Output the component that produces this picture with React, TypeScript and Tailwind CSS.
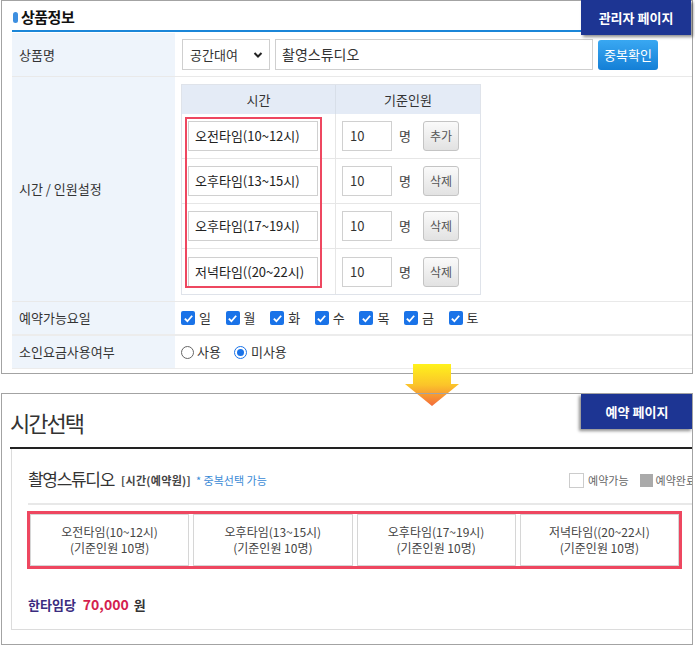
import React from "react";

const F = { fontFamily: '"Noto Sans CJK KR", "Noto Sans", sans-serif' };

function Check() {
  return (
    <span className="inline-flex w-[14px] h-[14px] rounded-[2px] bg-[#1a73e8] items-center justify-center">
      <svg width="11" height="11" viewBox="0 0 12 12">
        <path d="M2 6.2 L4.8 9 L10 3" stroke="white" strokeWidth="2" fill="none" />
      </svg>
    </span>
  );
}

const slots = [
  "오전타임(10~12시)",
  "오후타임(13~15시)",
  "오후타임(17~19시)",
  "저녁타임((20~22시)",
];

export default function App() {
  const days = ["일", "월", "화", "수", "목", "금", "토"];
  return (
    <div className="w-[695px] h-[646px] bg-white relative overflow-hidden text-[#333]" style={F}>
      {/* Top panel */}
      <div className="relative ml-[1px] w-[692px] h-[374px] border border-[#a3a3a3] pl-[10px]">
        <div className="h-[29px] flex items-end pb-[4px] gap-[3px]">
          <span className="w-[5px] h-[11px] rounded-[3px] bg-[#3d8fe0] mb-[3px] ml-[1px]"></span>
          <span className="text-[15px] font-bold leading-[18px] text-[#111] tracking-[-0.5px]">상품정보</span>
        </div>
        <div className="h-[2px] bg-[#1b86d8] mr-[4px]"></div>
        <div className="absolute right-[1px] top-[-1px] w-[110px] h-[35px] bg-[#1d3593] text-white text-[13px] font-bold flex items-center justify-center shadow-[2px_2px_3px_rgba(0,0,0,0.45)]">
          관리자 페이지
        </div>

        {/* rows */}
        <div className="mt-[1px] grid grid-cols-[163px_1fr] text-[13px]">
          {/* row1 */}
          <div className="h-[43px] bg-[#eef4fb] flex items-center pl-[7px]">상품명</div>
          <div className="h-[43px] flex items-center pl-[7px] gap-[5px]">
            <div className="w-[88px] h-[31px] border border-[#cfcfcf] flex items-center justify-between pl-[7px] pr-[6px]">
              <span>공간대여</span>
              <svg width="10" height="8" viewBox="0 0 10 8">
                <path d="M1.5 2 L5 5.5 L8.5 2" stroke="#222" strokeWidth="2" fill="none" />
              </svg>
            </div>
            <div className="w-[318px] h-[31px] border border-[#cfcfcf] flex items-center pl-[6px] text-[14px]">촬영스튜디오</div>
            <div className="w-[60px] h-[30px] rounded-[3px] bg-gradient-to-b from-[#39a8f2] to-[#137fd6] text-white flex items-center justify-center text-[13px]">
              중복확인
            </div>
          </div>
          <div className="col-span-2 h-[1px] bg-[#e9e9e9]"></div>

          {/* row2 */}
          <div className="h-[224px] bg-[#eef4fb] flex items-center pl-[7px]">시간 / 인원설정</div>
          <div className="h-[224px] pl-[6px] pt-[7px]">
            <div className="relative w-[300px] border border-[#dfe3ea]">
              <div className="grid grid-cols-[154px_1fr] h-[29px] bg-[#e4ebf6] text-[13px]">
                <div className="flex items-center justify-center border-r border-[#d8dfe9]">시간</div>
                <div className="flex items-center justify-center">기준인원</div>
              </div>
              {slots.map((s, i) => (
                <div key={i} className={`grid grid-cols-[154px_1fr] h-[45px] ${i < 3 ? "border-b border-[#e6e6e6]" : ""}`}>
                  <div className="flex items-center pl-[6px] border-r border-[#e6e6e6]">
                    <div className="w-[130px] h-[30px] border border-[#d0d0d0] flex items-center pl-[6px] text-[13px] text-[#222]">{s}</div>
                  </div>
                  <div className="flex items-center pl-[6px]">
                    <div className="w-[50px] h-[30px] border border-[#d0d0d0] flex items-center pl-[7px] text-[13px]">10</div>
                    <span className="ml-[7px] text-[13px] text-[#444]">명</span>
                    <div className="ml-[12px] w-[36px] h-[30px] border border-[#c4c4c4] rounded-[3px] bg-gradient-to-b from-[#fafafa] to-[#e2e2e2] flex items-center justify-center text-[12px] text-[#555]">
                      {i === 0 ? "추가" : "삭제"}
                    </div>
                  </div>
                </div>
              ))}
              <div className="absolute left-[3px] top-[32px] w-[137px] h-[171px] border-[2px] border-[#ee4760]"></div>
            </div>
          </div>
          <div className="col-span-2 h-[1px] bg-[#e9e9e9]"></div>

          {/* row3 */}
          <div className="h-[32px] bg-[#eef4fb] flex items-center pl-[7px]">예약가능요일</div>
          <div className="h-[32px] flex items-center pl-[6px]">
            {days.map((d) => (
              <div key={d} className="w-[44.6px] flex items-center gap-[4px] text-[13px]">
                <Check />
                <span>{d}</span>
              </div>
            ))}
          </div>
          <div className="col-span-2 h-[2px] bg-[#ececec]"></div>

          {/* row4 */}
          <div className="h-[32px] bg-[#eef4fb] flex items-center pl-[7px]">소인요금사용여부</div>
          <div className="h-[32px] flex items-center pl-[6px] text-[13px]">
            <span className="w-[13px] h-[13px] rounded-full border border-[#666] bg-white"></span>
            <span className="ml-[3px]">사용</span>
            <span className="ml-[13px] w-[13px] h-[13px] rounded-full border border-[#1a73e8] bg-white flex items-center justify-center">
              <span className="w-[7px] h-[7px] rounded-full bg-[#1a73e8]"></span>
            </span>
            <span className="ml-[4px]">미사용</span>
          </div>
          <div className="col-span-2 h-[1px] bg-[#ececec]"></div>
        </div>
      </div>

      {/* Arrow */}
      <svg className="absolute left-[404px] top-[364px]" width="56" height="43" viewBox="0 0 56 43">
        <defs>
          <linearGradient id="ag" x1="0" y1="0" x2="0" y2="1">
            <stop offset="0" stopColor="#fff21c" />
            <stop offset="0.5" stopColor="#fbc42a" />
            <stop offset="1" stopColor="#f36b3b" />
          </linearGradient>
        </defs>
        <polygon points="9,0 47,0 47,20 55,20 28,42 1,20 9,20" fill="url(#ag)" />
      </svg>

      {/* Bottom panel */}
      <div className="relative mt-[19px] ml-[1px] w-[692px] h-[252px] border border-[#a3a3a3] pl-[8px] overflow-hidden">
        <div className="h-[53px] flex items-center pl-[0px] pt-[4px] text-[22px] tracking-[-2px] text-[#333]">시간선택</div>
        <div className="h-[2px] bg-[#222]"></div>
        <div className="absolute right-[-1px] top-[0px] w-[112px] h-[35px] bg-[#1d3593] text-white text-[13px] font-bold flex items-center justify-center shadow-[-2px_2px_3px_rgba(0,0,0,0.45)]">
          예약 페이지
        </div>
        <div className="ml-[1px] h-[181px] border-l border-b border-[#dcdcdc] pl-[16px]">
          <div className="h-[54px] flex items-center pt-[5px]">
            <span className="text-[17px] tracking-[-1.3px] text-[#333]">촬영스튜디오</span>
            <span className="ml-[7px] text-[11px] font-bold text-[#444] mt-[3px] tracking-[0.3px]">[시간(예약원)]</span>
            <span className="ml-[5px] text-[11px] text-[#3a8ad6] mt-[3px]">* 중복선택 가능</span>
            <div className="ml-auto flex items-center text-[11px] text-[#666] mt-[3px] mr-[-4px]">
              <span className="w-[15px] h-[15px] border border-[#ccc] bg-white"></span>
              <span className="ml-[4px]">예약가능</span>
              <span className="ml-[11px] w-[13px] h-[13px] bg-[#aaa]"></span>
              <span className="ml-[3px] whitespace-nowrap">예약완료</span>
            </div>
          </div>
          <div className="h-[2px] bg-[#e8e8e8]"></div>
          <div className="mt-[6px] w-[655px] h-[58px] border-[3px] border-[#ee4760] flex gap-[4px] p-[0px] ml-[-1px]">
            {slots.map((s, i) => (
              <div key={i} className="flex-1 border border-[#d6d6d6] flex flex-col items-center justify-center text-[12px] leading-[16px] text-[#444]">
                <span>{s}</span>
                <span>(기준인원 10명)</span>
              </div>
            ))}
          </div>
          <div className="mt-[25px] flex items-baseline text-[13px]">
            <span className="font-bold text-[#3b2c80]">한타임당</span>
            <span className="ml-[7px] font-bold text-[14px] text-[#d41e4e]">70,000</span>
            <span className="ml-[5px] font-bold text-[#333]">원</span>
          </div>
        </div>
      </div>
    </div>
  );
}
